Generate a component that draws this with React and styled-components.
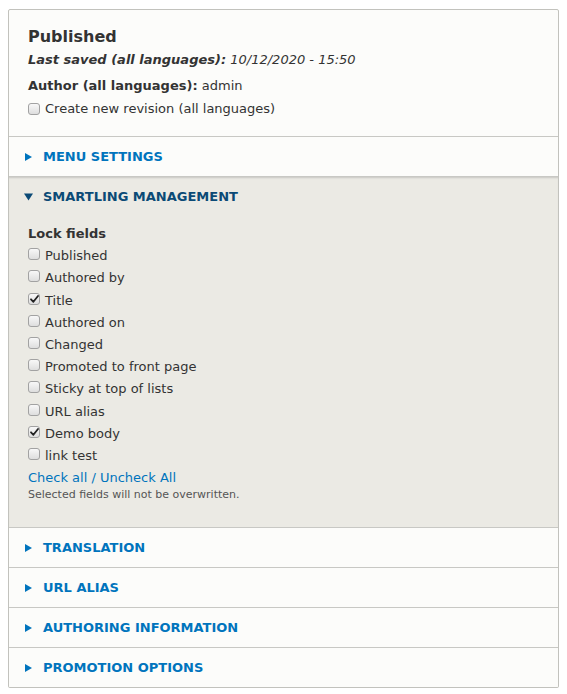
import styled, { createGlobalStyle } from 'styled-components';

const GlobalStyle = createGlobalStyle`
  body {
    margin: 8px;
    font-family: 'DejaVu Sans', 'Liberation Sans', sans-serif;
    font-size: 13px;
    color: #333;
    background: #fff;
  }
`;

const Meta = styled.div`
  margin-top: 1px;
  border: 1px solid #c2c2bd;
  border-radius: 2px;
  background-color: #fcfcfa;
  box-shadow: 0 1px 1px rgba(0, 0, 0, 0.06);
  overflow: hidden;
`;

const MetaHeader = styled.div`
  padding: 17px 19px 18.5px;
`;

const Title = styled.h2`
  margin: 0 0 3.5px;
  font-size: 16px;
  line-height: 20px;
  font-weight: bold;
`;

const Line = styled.p`
  margin: 0 0 ${(props) => props.$mb || 0}px;
  line-height: 18px;
  font-style: ${(props) => (props.$italic ? 'italic' : 'normal')};

  b {
    font-weight: bold;
  }
`;

const CheckRow = styled.label`
  display: flex;
  align-items: flex-start;
  height: ${(props) => props.$h || 22.2}px;
  line-height: ${(props) => props.$h || 22.2}px;
  gap: 5px;
`;

const Box = styled.span`
  box-sizing: border-box;
  flex: none;
  width: 12px;
  height: 12px;
  margin-top: ${(props) => props.$top || 3}px;
  border: 1px solid #a2a2a2;
  border-radius: 3px;
  background: linear-gradient(#f8f8f8, #dedede);
  display: flex;
  align-items: center;
  justify-content: center;

  svg {
    display: block;
  }
`;

const Details = styled.div`
  border-top: 1px solid #c8c8c4;
  background-color: ${(props) => (props.$open ? '#ebeae4' : '#fcfcfa')};
  box-shadow: ${(props) =>
    props.$open ? 'inset 0 2px 2px -1px rgba(0, 0, 0, 0.15)' : 'none'};
`;

const Summary = styled.div`
  height: 39px;
  display: flex;
  align-items: center;
  padding-left: 15px;
  gap: 10px;
  font-weight: bold;
  text-transform: uppercase;
  color: ${(props) => (props.$open ? '#0b4a76' : '#0074bd')};
  cursor: pointer;

  svg {
    display: block;
    flex: none;
  }
`;

const Content = styled.div`
  padding: 7px 19px 25px;
`;

const FieldLabel = styled.div`
  font-weight: bold;
  height: 22.2px;
  line-height: 22.2px;
`;

const Link = styled.a`
  display: block;
  color: #0074bd;
  text-decoration: none;
  height: 22.2px;
  line-height: 22.2px;
`;

const Description = styled.div`
  font-size: 11px;
  line-height: 14px;
  color: #555;
  margin-top: -1px;
`;

function Checkbox({ label, checked, h, top }) {
  return (
    <CheckRow $h={h}>
      <Box $top={top}>
        {checked && (
          <svg width="9" height="8" viewBox="0 0 9 8">
            <path
              d="M1 4.3 L3.4 6.8 L8 1"
              fill="none"
              stroke="#222"
              strokeWidth="1.8"
              strokeLinecap="round"
              strokeLinejoin="round"
            />
          </svg>
        )}
      </Box>
      <span>{label}</span>
    </CheckRow>
  );
}

function Arrow({ open }) {
  if (open) {
    return (
      <svg width="9" height="8" viewBox="0 0 9 8">
        <polygon points="0,0.5 9,0.5 4.5,7.5" fill="currentColor" />
      </svg>
    );
  }
  return (
    <svg width="9" height="8" viewBox="0 0 9 8">
      <polygon points="1,0 8,4 1,8" fill="currentColor" />
    </svg>
  );
}

function Section({ title, open, children }) {
  return (
    <Details $open={open}>
      <Summary $open={open}>
        <Arrow open={open} />
        {title}
      </Summary>
      {open && children}
    </Details>
  );
}

const fields = [
  { label: 'Published' },
  { label: 'Authored by' },
  { label: 'Title', checked: true },
  { label: 'Authored on' },
  { label: 'Changed' },
  { label: 'Promoted to front page' },
  { label: 'Sticky at top of lists' },
  { label: 'URL alias' },
  { label: 'Demo body', checked: true },
  { label: 'link test' },
];

export default function App() {
  return (
    <>
      <GlobalStyle />
      <Meta>
        <MetaHeader>
          <Title>Published</Title>
          <Line $italic $mb={8}>
            <b>Last saved (all languages):</b> 10/12/2020 - 15:50
          </Line>
          <Line $mb={5}>
            <b>Author (all languages):</b> admin
          </Line>
          <Checkbox label="Create new revision (all languages)" h={18} top={3} />
        </MetaHeader>
        <Section title="Menu settings" />
        <Section title="Smartling management" open>
          <Content>
            <FieldLabel>Lock fields</FieldLabel>
            {fields.map((f) => (
              <Checkbox key={f.label} label={f.label} checked={f.checked} />
            ))}
            <Link href="#">Check all / Uncheck All</Link>
            <Description>Selected fields will not be overwritten.</Description>
          </Content>
        </Section>
        <Section title="Translation" />
        <Section title="URL alias" />
        <Section title="Authoring information" />
        <Section title="Promotion options" />
      </Meta>
    </>
  );
}
